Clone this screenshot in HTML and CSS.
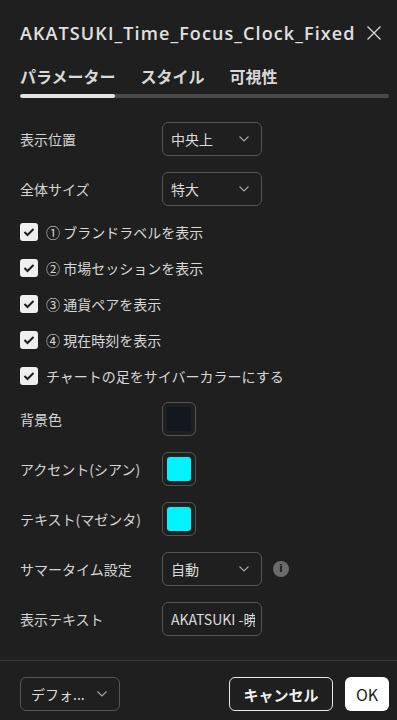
FILE: index.html
```html
<!DOCTYPE html>
<html lang="ja">
<head>
<meta charset="utf-8">
<link rel="stylesheet" href="styles.css">
</head>
<body>
<div class="dialog">
  <div class="title-row">
    <div class="title">AKATSUKI_Time_Focus_Clock_Fixed</div>
    <svg class="close" width="16" height="16" viewBox="0 0 16 16"><path d="M1.5 1.5 L14.5 14.5 M14.5 1.5 L1.5 14.5" stroke="#d6d6d6" stroke-width="1.3" fill="none"/></svg>
  </div>
  <div class="tabs">
    <span class="tab active">パラメーター</span>
    <span class="tab">スタイル</span>
    <span class="tab">可視性</span>
  </div>
  <div class="tabbar"><div class="tabbar-fill"></div></div>

  <div class="form">
    <div class="row">
      <span class="label">表示位置</span>
      <div class="select"><span>中央上</span><svg class="chev" width="10" height="6" viewBox="0 0 10 6"><path d="M0.5 0.5 L5 5 L9.5 0.5" stroke="#a8a8a8" stroke-width="1.1" fill="none"/></svg></div>
    </div>
    <div class="row">
      <span class="label">全体サイズ</span>
      <div class="select"><span>特大</span><svg class="chev" width="10" height="6" viewBox="0 0 10 6"><path d="M0.5 0.5 L5 5 L9.5 0.5" stroke="#a8a8a8" stroke-width="1.1" fill="none"/></svg></div>
    </div>
    <div class="check-row"><span class="cb"><svg width="12" height="10" viewBox="0 0 12 10"><path d="M1.5 5 L4.5 8 L10.5 2" stroke="#1f1f1f" stroke-width="2" fill="none"/></svg></span><span class="cb-label">① ブランドラベルを表示</span></div>
    <div class="check-row"><span class="cb"><svg width="12" height="10" viewBox="0 0 12 10"><path d="M1.5 5 L4.5 8 L10.5 2" stroke="#1f1f1f" stroke-width="2" fill="none"/></svg></span><span class="cb-label">② 市場セッションを表示</span></div>
    <div class="check-row"><span class="cb"><svg width="12" height="10" viewBox="0 0 12 10"><path d="M1.5 5 L4.5 8 L10.5 2" stroke="#1f1f1f" stroke-width="2" fill="none"/></svg></span><span class="cb-label">③ 通貨ペアを表示</span></div>
    <div class="check-row"><span class="cb"><svg width="12" height="10" viewBox="0 0 12 10"><path d="M1.5 5 L4.5 8 L10.5 2" stroke="#1f1f1f" stroke-width="2" fill="none"/></svg></span><span class="cb-label">④ 現在時刻を表示</span></div>
    <div class="check-row"><span class="cb"><svg width="12" height="10" viewBox="0 0 12 10"><path d="M1.5 5 L4.5 8 L10.5 2" stroke="#1f1f1f" stroke-width="2" fill="none"/></svg></span><span class="cb-label">チャートの足をサイバーカラーにする</span></div>
    <div class="row">
      <span class="label">背景色</span>
      <div class="swatch"><div class="swatch-in dark"></div></div>
    </div>
    <div class="row">
      <span class="label">アクセント(シアン)</span>
      <div class="swatch"><div class="swatch-in cyan"></div></div>
    </div>
    <div class="row">
      <span class="label">テキスト(マゼンタ)</span>
      <div class="swatch"><div class="swatch-in cyan"></div></div>
    </div>
    <div class="row">
      <span class="label">サマータイム設定</span>
      <div class="select"><span>自動</span><svg class="chev" width="10" height="6" viewBox="0 0 10 6"><path d="M0.5 0.5 L5 5 L9.5 0.5" stroke="#a8a8a8" stroke-width="1.1" fill="none"/></svg></div>
      <span class="info">i</span>
    </div>
    <div class="row">
      <span class="label">表示テキスト</span>
      <div class="input"><span class="input-text">AKATSUKI -暁- Time Focus</span></div>
    </div>
  </div>

  <div class="divider"></div>
  <div class="footer">
    <div class="select small"><span>デフォ...</span><svg class="chev" width="10" height="6" viewBox="0 0 10 6"><path d="M0.5 0.5 L5 5 L9.5 0.5" stroke="#a8a8a8" stroke-width="1.1" fill="none"/></svg></div>
    <div class="spacer"></div>
    <button class="btn cancel">キャンセル</button>
    <button class="btn ok">OK</button>
  </div>
</div>
</body>
</html>
```
FILE: styles.css
```css
html, body {
  margin: 0;
  padding: 0;
  background: #1f1f1f;
}
body {
  width: 397px;
  height: 720px;
  overflow: hidden;
  font-family: "Noto Sans CJK JP", "Noto Sans", sans-serif;
  color: #d8d8d8;
}
.dialog {
  padding: 0 8px 0 20px;
  height: 720px;
  box-sizing: border-box;
  display: flex;
  flex-direction: column;
}
.title-row {
  margin-top: 20px;
  height: 26px;
  display: flex;
  align-items: center;
}
.title {
  font-family: "Open Sans", "Noto Sans", sans-serif;
  font-size: 18px;
  font-weight: 600;
  letter-spacing: 1.1px;
  color: #e0e0e0;
  line-height: 26px;
  white-space: nowrap;
}
.close {
  margin-left: auto;
  margin-right: 7px;
}
.tabs {
  margin-top: 18px;
  height: 24px;
  display: flex;
  gap: 25px;
}
.tab {
  font-size: 16px;
  font-weight: 700;
  line-height: 24px;
  color: #d8d8d8;
  white-space: nowrap;
}
.tabbar {
  margin-top: 6px;
  height: 4px;
  border-radius: 2px;
  background: #4a4a4a;
  overflow: hidden;
}
.tabbar-fill {
  width: 95px;
  height: 4px;
  border-radius: 2px;
  background: #e3e3e3;
}
.form {
  margin-top: 24px;
  display: flex;
  flex-direction: column;
  gap: 16px;
}
.row {
  height: 34px;
  display: flex;
  align-items: center;
}
.label {
  width: 142px;
  font-size: 14px;
  line-height: 20px;
  color: #d4d4d4;
  white-space: nowrap;
}
.select {
  width: 100px;
  height: 34px;
  box-sizing: border-box;
  border: 1px solid #555555;
  border-radius: 6px;
  display: flex;
  align-items: center;
  padding: 0 8px 0 8px;
  font-size: 14px;
  color: #dcdcdc;
}
.select .chev {
  margin-left: auto;
  margin-right: 4px;
}
.swatch {
  width: 34px;
  height: 34px;
  box-sizing: border-box;
  border: 1px solid #555555;
  border-radius: 6px;
  display: flex;
  align-items: center;
  justify-content: center;
}
.swatch-in {
  width: 24px;
  height: 24px;
  border-radius: 3px;
}
.swatch-in.dark { background: #131722; }
.swatch-in.cyan { background: #00f4ff; }
.info {
  margin-left: 11px;
  width: 16px;
  height: 16px;
  border-radius: 50%;
  background: #6b6b6b;
  color: #1f1f1f;
  font-family: "DejaVu Sans", sans-serif;
  font-weight: 700;
  font-size: 11px;
  line-height: 16px;
  text-align: center;
}
.input {
  width: 100px;
  height: 34px;
  box-sizing: border-box;
  border: 1px solid #555555;
  border-radius: 6px;
  padding: 0 6px 0 8px;
  display: flex;
  align-items: center;
  overflow: hidden;
}
.input-text {
  font-size: 14px;
  color: #dcdcdc;
  white-space: nowrap;
  overflow: hidden;
}
.check-row {
  height: 20px;
  display: flex;
  align-items: center;
}
.cb {
  width: 18px;
  height: 18px;
  border-radius: 3px;
  background: #efefef;
  display: flex;
  align-items: center;
  justify-content: center;
  margin-right: 8px;
}
.cb-label {
  font-size: 14px;
  line-height: 20px;
  color: #d8d8d8;
  white-space: nowrap;
}
.divider {
  margin: 24px -8px 0 -20px;
  height: 1px;
  background: #3c3c3c;
}
.footer {
  margin-top: 16px;
  display: flex;
  align-items: center;
  height: 34px;
}
.select.small {
  padding-left: 10px;
  font-size: 14px;
}
.spacer { flex: 1; }
.btn {
  height: 34px;
  box-sizing: border-box;
  border-radius: 6px;
  font-family: "Noto Sans CJK JP", "Noto Sans", sans-serif;
  font-size: 15px;
  cursor: pointer;
}
.cancel {
  width: 104px;
  background: transparent;
  border: 1px solid #e8e8e8;
  color: #f0f0f0;
  font-weight: 700;
  margin-right: 12px;
}
.ok {
  width: 44px;
  background: #ffffff;
  border: none;
  color: #1a1a1a;
  font-weight: 400;
  font-size: 16px;
  padding: 0;
}
```
